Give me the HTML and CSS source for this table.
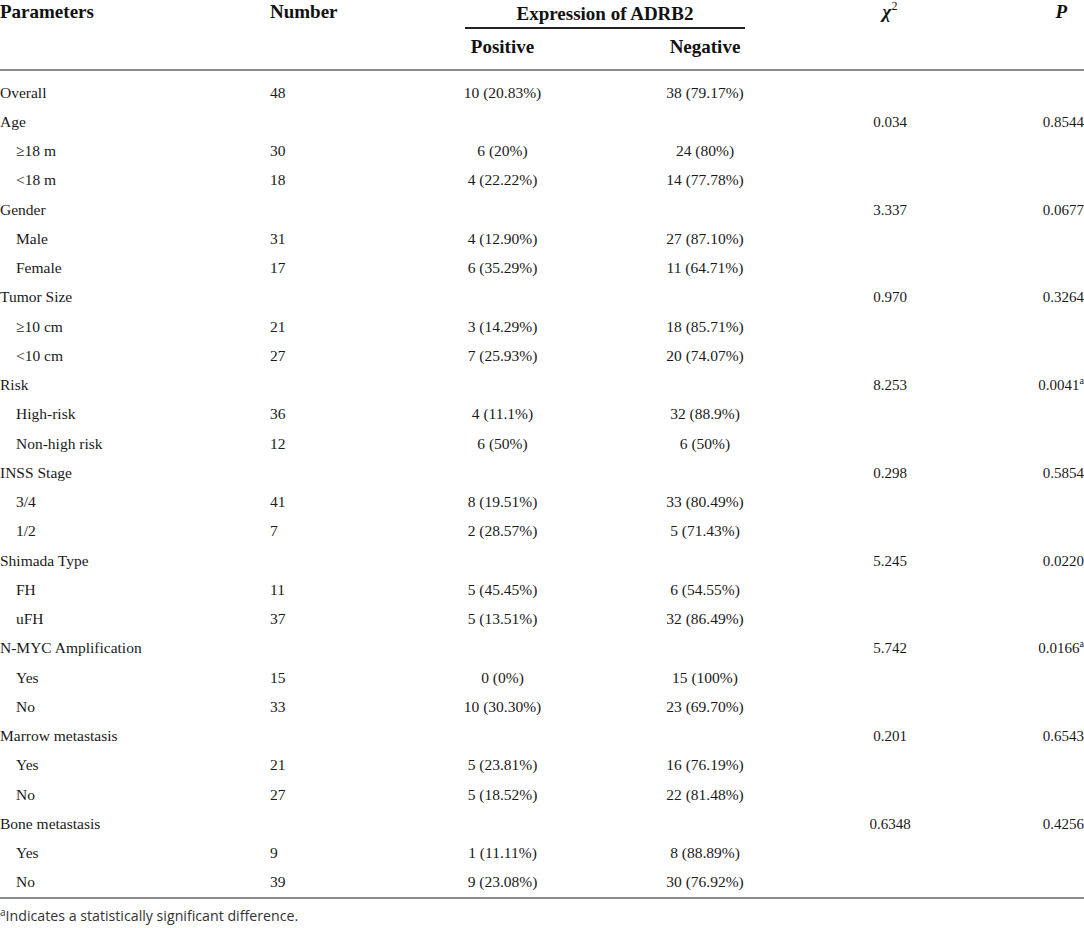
FILE: index.html
```html
<!DOCTYPE html>
<html>
<head>
<meta charset="utf-8">
<link rel="stylesheet" href="styles.css">
</head>
<body>
<table class="tbl">
  <colgroup>
    <col class="c1"><col class="c2"><col class="c3"><col class="c4"><col class="c5"><col class="c6">
  </colgroup>
  <thead>
    <tr class="h1">
      <th rowspan="2" class="left">Parameters</th>
      <th rowspan="2" class="left">Number</th>
      <th colspan="2" class="grp"><div class="grp-label">Expression of ADRB2</div></th>
      <th rowspan="2" class="chi"><i>χ</i><sup>2</sup></th>
      <th rowspan="2" class="pcol"><i>P</i></th>
    </tr>
    <tr class="h2">
      <th class="pos">Positive</th>
      <th class="neg">Negative</th>
    </tr>
  </thead>
  <tbody>
    <tr><td>Overall</td><td>48</td><td class="pos">10 (20.83%)</td><td class="neg">38 (79.17%)</td><td class="chi"></td><td class="pv"></td></tr>
    <tr><td>Age</td><td></td><td></td><td></td><td class="chi">0.034</td><td class="pv">0.8544</td></tr>
    <tr><td class="sub">≥18 m</td><td>30</td><td class="pos">6 (20%)</td><td class="neg">24 (80%)</td><td></td><td></td></tr>
    <tr><td class="sub">&lt;18 m</td><td>18</td><td class="pos">4 (22.22%)</td><td class="neg">14 (77.78%)</td><td></td><td></td></tr>
    <tr><td>Gender</td><td></td><td></td><td></td><td class="chi">3.337</td><td class="pv">0.0677</td></tr>
    <tr><td class="sub">Male</td><td>31</td><td class="pos">4 (12.90%)</td><td class="neg">27 (87.10%)</td><td></td><td></td></tr>
    <tr><td class="sub">Female</td><td>17</td><td class="pos">6 (35.29%)</td><td class="neg">11 (64.71%)</td><td></td><td></td></tr>
    <tr><td>Tumor Size</td><td></td><td></td><td></td><td class="chi">0.970</td><td class="pv">0.3264</td></tr>
    <tr><td class="sub">≥10 cm</td><td>21</td><td class="pos">3 (14.29%)</td><td class="neg">18 (85.71%)</td><td></td><td></td></tr>
    <tr><td class="sub">&lt;10 cm</td><td>27</td><td class="pos">7 (25.93%)</td><td class="neg">20 (74.07%)</td><td></td><td></td></tr>
    <tr><td>Risk</td><td></td><td></td><td></td><td class="chi">8.253</td><td class="pv">0.0041<sup>a</sup></td></tr>
    <tr><td class="sub">High-risk</td><td>36</td><td class="pos">4 (11.1%)</td><td class="neg">32 (88.9%)</td><td></td><td></td></tr>
    <tr><td class="sub">Non-high risk</td><td>12</td><td class="pos">6 (50%)</td><td class="neg">6 (50%)</td><td></td><td></td></tr>
    <tr><td>INSS Stage</td><td></td><td></td><td></td><td class="chi">0.298</td><td class="pv">0.5854</td></tr>
    <tr><td class="sub">3/4</td><td>41</td><td class="pos">8 (19.51%)</td><td class="neg">33 (80.49%)</td><td></td><td></td></tr>
    <tr><td class="sub">1/2</td><td>7</td><td class="pos">2 (28.57%)</td><td class="neg">5 (71.43%)</td><td></td><td></td></tr>
    <tr><td>Shimada Type</td><td></td><td></td><td></td><td class="chi">5.245</td><td class="pv">0.0220</td></tr>
    <tr><td class="sub">FH</td><td>11</td><td class="pos">5 (45.45%)</td><td class="neg">6 (54.55%)</td><td></td><td></td></tr>
    <tr><td class="sub">uFH</td><td>37</td><td class="pos">5 (13.51%)</td><td class="neg">32 (86.49%)</td><td></td><td></td></tr>
    <tr><td>N-MYC Amplification</td><td></td><td></td><td></td><td class="chi">5.742</td><td class="pv">0.0166<sup>a</sup></td></tr>
    <tr><td class="sub">Yes</td><td>15</td><td class="pos">0 (0%)</td><td class="neg">15 (100%)</td><td></td><td></td></tr>
    <tr><td class="sub">No</td><td>33</td><td class="pos">10 (30.30%)</td><td class="neg">23 (69.70%)</td><td></td><td></td></tr>
    <tr><td>Marrow metastasis</td><td></td><td></td><td></td><td class="chi">0.201</td><td class="pv">0.6543</td></tr>
    <tr><td class="sub">Yes</td><td>21</td><td class="pos">5 (23.81%)</td><td class="neg">16 (76.19%)</td><td></td><td></td></tr>
    <tr><td class="sub">No</td><td>27</td><td class="pos">5 (18.52%)</td><td class="neg">22 (81.48%)</td><td></td><td></td></tr>
    <tr><td>Bone metastasis</td><td></td><td></td><td></td><td class="chi">0.6348</td><td class="pv">0.4256</td></tr>
    <tr><td class="sub">Yes</td><td>9</td><td class="pos">1 (11.11%)</td><td class="neg">8 (88.89%)</td><td></td><td></td></tr>
    <tr><td class="sub">No</td><td>39</td><td class="pos">9 (23.08%)</td><td class="neg">30 (76.92%)</td><td></td><td></td></tr>
  </tbody>
</table>
<p class="note"><sup>a</sup>Indicates a statistically significant difference.</p>
</body>
</html>
```
FILE: styles.css
```css
html, body {
  margin: 0;
  padding: 0;
  background: #fff;
}
body {
  font-family: "Liberation Serif", "Times New Roman", serif;
  color: #1a1a1a;
}
.tbl {
  width: 1084px;
  border-collapse: collapse;
  table-layout: fixed;
  font-size: 15.5px;
}
.c1 { width: 270px; }
.c2 { width: 170px; }
.c3 { width: 125px; }
.c4 { width: 280px; }
.c5 { width: 90px; }
.c6 { width: 149px; }

.tbl th {
  font-weight: bold;
  font-size: 19px;
  padding: 0;
  color: #111;
}
.h1 th {
  height: 29px;
  vertical-align: top;
  line-height: 24px;
}
.h1 th.left { text-align: left; }
.h2 th {
  height: 40px;
  line-height: 36px;
  vertical-align: top;
  border-bottom: 2px solid #8a8a8a;
}
.h1 th[rowspan] { border-bottom: 2px solid #8a8a8a; }
.grp { text-align: left; }
.grp-label {
  width: 280px;
  margin-left: 25px;
  text-align: center;
  border-bottom: 2px solid #222;
  line-height: 27px;
  height: 27px;
}
.h1 th.chi {
  text-align: center;
  font-size: 19px;
}
.h1 th.chi sup {
  font-size: 12px;
  font-weight: normal;
  vertical-align: 8px;
  line-height: 0;
}
.h1 th.pcol {
  text-align: right;
  padding-right: 17px;
}
.tbl td {
  padding: 0;
  height: 29.26px;
  line-height: 20px;
  vertical-align: middle;
  white-space: nowrap;
}
.tbl tbody tr:first-child td {
  padding-top: 7px;
}
.tbl tbody tr:last-child td {
  border-bottom: 2px solid #8a8a8a;
}
.sub { padding-left: 16px !important; }
.pos, .neg, .chi { text-align: center; }
.pv { text-align: right; }
.pv sup {
  font-size: 10px;
  line-height: 0;
  vertical-align: 6px;
}
td.chi, td.pv { font-size: 15px; }
.note {
  margin: 8px 0 0 0;
  font-family: "Open Sans", "Liberation Sans", sans-serif;
  font-size: 14.2px;
  line-height: 18px;
  color: #333;
}
.note sup {
  font-size: 10px;
  line-height: 0;
  vertical-align: 5px;
}
```
